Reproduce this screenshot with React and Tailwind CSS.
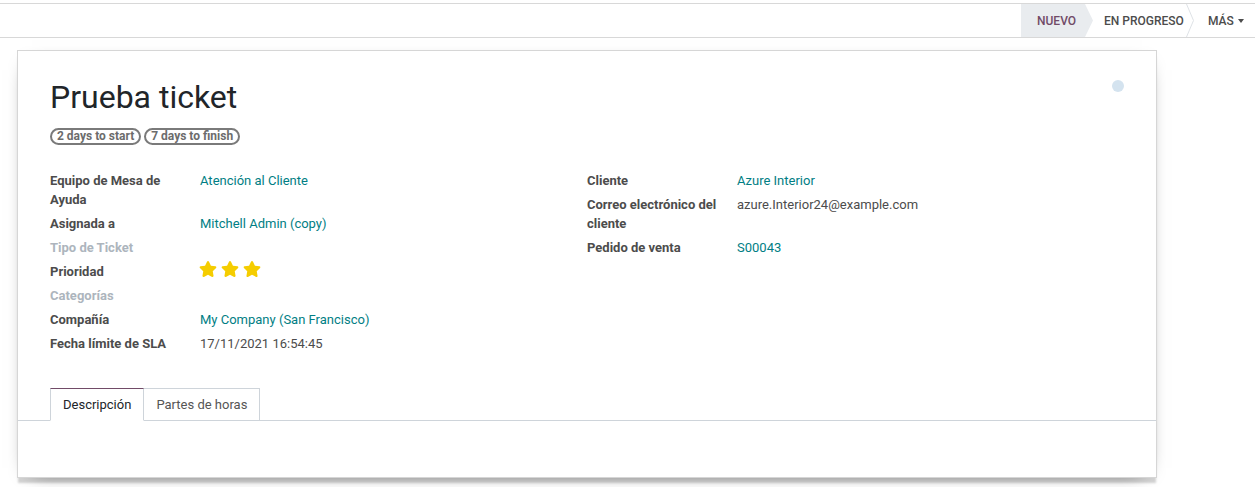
import { FaStar } from 'react-icons/fa';

const teal = 'text-[#017e84]';

// Left and right field groups
const leftFields = [
  { label: 'Equipo de Mesa de Ayuda', value: 'Atención al Cliente', link: true },
  { label: 'Asignada a', value: 'Mitchell Admin (copy)', link: true },
  { label: 'Tipo de Ticket', muted: true },
  { label: 'Prioridad', stars: 3 },
  { label: 'Categorías', muted: true },
  { label: 'Compañía', value: 'My Company (San Francisco)', link: true },
  { label: 'Fecha límite de SLA', value: '17/11/2021 16:54:45' },
];

const rightFields = [
  { label: 'Cliente', value: 'Azure Interior', link: true },
  { label: 'Correo electrónico del cliente', value: 'azure.Interior24@example.com' },
  { label: 'Pedido de venta', value: 'S00043', link: true },
];

function FieldRow({ field }) {
  return (
    <div className="flex">
      <div
        className={`w-[150px] shrink-0 pr-4 font-bold ${
          field.muted ? 'text-[#adb5bd]' : 'text-[#4c4c4c]'
        }`}
      >
        {field.label}
      </div>
      <div className={`flex-1 ${field.link ? teal : 'text-[#4c4c4c]'}`}>
        {field.stars ? (
          <div className="flex items-start gap-[4px] h-[19px] -ml-px -mt-[2px]">
            {Array.from({ length: field.stars }).map((_, i) => (
              <FaStar key={i} size={18} color="#f5cd00" />
            ))}
          </div>
        ) : (
          field.value
        )}
      </div>
    </div>
  );
}

function StatusBar() {
  return (
    <div className="flex justify-end h-full text-xs font-medium uppercase">
      <div className="w-[72px] h-full flex items-center pl-4 bg-[#e9ecef] text-[#714b67] [clip-path:polygon(0_0,64px_0,72px_50%,64px_100%,0_100%)]">
        Nuevo
      </div>
      <div className="w-[93px] h-full flex items-center pl-[11px] text-[#4c4c4c]">
        En progreso
      </div>
      <svg width="8" height="33" viewBox="0 0 8 33" className="shrink-0">
        <path d="M0.5 0 L7.5 16.5 L0.5 33" fill="none" stroke="#dee2e6" strokeWidth="1" />
      </svg>
      <div className="w-[61px] h-full flex items-center pl-[14px] text-[#4c4c4c]">
        Más
        <span className="ml-[4px] border-x-[3.5px] border-x-transparent border-t-[4px] border-t-[#4c4c4c]" />
      </div>
    </div>
  );
}

export default function App() {
  return (
    <div className="min-h-[487px] bg-white font-['Roboto',sans-serif] text-[13px] leading-[19px] overflow-hidden">
      {/* Control panel */}
      <div className="mt-[3px] h-[35px] border-y border-[#d8d8d8]">
        <StatusBar />
      </div>

      {/* Form sheet */}
      <div className="pt-3 pl-[17px] w-[1157px]">
        <div className="border border-[#d6d6d6] bg-white shadow-[0_6px_2px_-1px_rgba(0,0,0,0.17),0_5px_20px_-15px_#000] h-[428px] px-8 pt-[27px]">
          <div className="flex justify-between items-start">
            <h1 className="text-[32px] leading-[38.4px] text-[#212529] font-normal">Prueba ticket</h1>
            <span className="mt-[2px] w-3 h-3 rounded-full bg-[#d4e3ef]" />
          </div>

          <div className="flex gap-[3px] mt-[12px]">
            {['2 days to start', '7 days to finish'].map((b) => (
              <span
                key={b}
                className="border-2 border-[#7a7a7a] rounded-full px-[5px] text-xs font-bold leading-[13px] text-[#6c6c6c]"
              >
                {b}
              </span>
            ))}
          </div>

          <div className="grid grid-cols-2 mt-[26px]">
            <div className="flex flex-col gap-[5px]">
              {leftFields.map((f) => (
                <FieldRow key={f.label} field={f} />
              ))}
            </div>
            <div className="flex flex-col gap-[5px]">
              {rightFields.map((f) => (
                <FieldRow key={f.label} field={f} />
              ))}
            </div>
          </div>

          {/* Notebook tabs */}
          <div className="-mx-8 mt-[35px] border-b border-[#ced4da] px-8 flex">
            <div className="-mb-px h-[33px] px-3 flex items-center bg-white border border-[#ced4da] border-t-[#714b67] border-b-white text-[#212529]">
              Descripción
            </div>
            <div className="-mb-px h-[33px] px-3 flex items-center border border-l-0 border-[#ced4da] text-[#555]">
              Partes de horas
            </div>
          </div>
        </div>
      </div>
    </div>
  );
}
